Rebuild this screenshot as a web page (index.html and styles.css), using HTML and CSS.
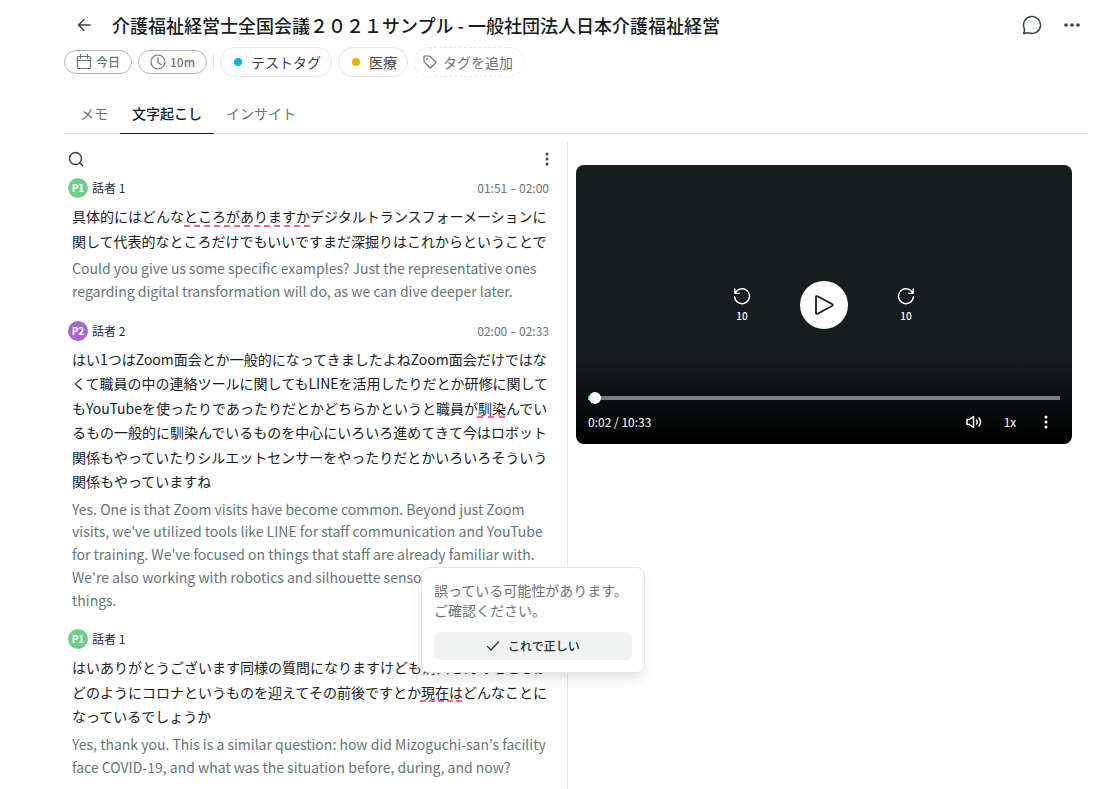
FILE: index.html
```html
<!DOCTYPE html>
<html lang="ja">
<head>
    <meta charset="UTF-8">
    <meta name="viewport" content="width=device-width, initial-scale=1.0">
    <title>介護福祉経営士全国会議２０２１サンプル</title>
    <link rel="stylesheet" href="styles.css">
</head>
<body>
    <header class="page-header">
        <div class="title-row">
            <button type="button" class="icon-button" aria-label="戻る">
                <svg class="icon icon-back" viewBox="0 0 16 16"><path d="M14 8H2.500M8 2.500L2.500 8L8 13.500"/></svg>
            </button>
            <h1>介護福祉経営士全国会議２０２１サンプル - 一般社団法人日本介護福祉経営</h1>
            <div class="title-actions">
                <button type="button" class="icon-button" aria-label="コメント">
                    <svg class="icon icon-comment" viewBox="0 0 20 20"><path d="M1.500 18.500Q2.600 16.500 2.500 15Q2.500 14 2 12.700A8.500 8.500 0 1 1 7.300 18Q6 17.500 4.500 18Q3 18.500 1.500 18.500Z"/></svg>
                </button>
                <button type="button" class="icon-button" aria-label="その他">
                    <svg class="icon icon-dots" viewBox="0 0 20 20"><circle cx="4" cy="10" r="1.800"/><circle cx="10" cy="10" r="1.800"/><circle cx="16" cy="10" r="1.800"/></svg>
                </button>
            </div>
        </div>

        <div class="meta-row">
            <span class="chip">
                <svg class="icon chip-icon" viewBox="0 0 16 16"><rect x="1.500" y="2.500" width="13" height="12" rx="1"/><path d="M1.500 6.500h13M4.500 0.500v4M11.500 0.500v4"/></svg>
                今日
            </span>
            <span class="chip">
                <svg class="icon chip-icon" viewBox="0 0 16 16"><circle cx="8" cy="8" r="7"/><path d="M8 3.500V8.500L11 10.500"/></svg>
                10m
            </span>
            <span class="meta-divider"></span>
            <button type="button" class="tag"><span class="tag-dot tag-dot-cyan"></span>テストタグ</button>
            <button type="button" class="tag"><span class="tag-dot tag-dot-yellow"></span>医療</button>
            <button type="button" class="tag tag-add">
                <svg class="icon tag-icon" viewBox="0 0 14 14"><path d="M1.500 1H6Q6.700 1 7.200 1.500L12.500 6.700Q13.200 7.400 12.500 8.100L8.100 12.500Q7.400 13.200 6.700 12.500L1.500 7.200Q1 6.700 1 6V1.500Q1 1 1.500 1Z"/><circle cx="4" cy="4" r="0.400"/></svg>
                タグを追加
            </button>
        </div>

        <nav class="tabs">
            <a href="#memo" class="tab">メモ</a>
            <a href="#transcript" class="tab active">文字起こし</a>
            <a href="#insight" class="tab">インサイト</a>
        </nav>
    </header>

    <main class="content">
        <section class="transcript" id="transcript">
            <div class="toolbar">
                <button type="button" class="tool-button" aria-label="検索">
                    <svg class="icon icon-search" viewBox="0 0 16 16"><circle cx="7.500" cy="7.500" r="6"/><path d="M12 12L14.500 14.500"/></svg>
                </button>
                <button type="button" class="tool-button" aria-label="メニュー">
                    <svg class="icon icon-dots icon-small" viewBox="0 0 16 16"><circle cx="8" cy="3" r="1.500"/><circle cx="8" cy="8" r="1.500"/><circle cx="8" cy="13" r="1.500"/></svg>
                </button>
            </div>

            <article class="segment">
                <div class="speaker">
                    <span class="avatar avatar-green">P1</span>
                    <span class="speaker-name">話者 1</span>
                    <span class="time">01:51 – 02:00</span>
                </div>
                <p class="speech">具体的にはどんな<span class="unsure">ところがありますか</span>デジタルトランスフォーメーションに関して代表的なところだけでもいいですまだ深掘りはこれからということで</p>
                <p class="translation" lang="en">Could you give us some specific examples? Just the representative ones regarding digital transformation will do, as we can dive deeper later.</p>
            </article>

            <article class="segment">
                <div class="speaker">
                    <span class="avatar avatar-purple">P2</span>
                    <span class="speaker-name">話者 2</span>
                    <span class="time">02:00 – 02:33</span>
                </div>
                <p class="speech">はい1つはZoom面会とか一般的になってきましたよねZoom面会だけではなくて職員の中の連絡ツールに関してもLINEを活用したりだとか研修に関してもYouTubeを使ったりであったりだとかどちらかというと職員が<span class="unsure">馴染</span>んでいるもの一般的に馴染んでいるものを中心にいろいろ進めてきて今はロボット関係もやっていたりシルエットセンサーをやったりだとかいろいろそういう関係もやっていますね</p>
                <p class="translation" lang="en">Yes. One is that Zoom visits have become common. Beyond just Zoom visits, we've utilized tools like LINE for staff communication and YouTube for training. We've focused on things that staff are already familiar with. We're also working with robotics and silhouette sensors, among other things.</p>
            </article>

            <article class="segment">
                <div class="speaker">
                    <span class="avatar avatar-green">P1</span>
                    <span class="speaker-name">話者 1</span>
                </div>
                <div class="speech">はいありがとうございます同様の質問になりますけども溝口さんのところがどのようにコロナというものを迎えてその前後ですとか<span class="unsure has-popover">現在は<span class="popover">
                    <span class="popover-text">誤っている可能性があります。<br>ご確認ください。</span>
                    <button type="button" class="confirm-button">
                        <svg class="icon icon-check" viewBox="0 0 14 14"><path d="M1.500 7.500L5 11L12.500 3"/></svg>
                        これで正しい
                    </button>
                </span></span>どんなことになっているでしょうか</div>
                <p class="translation" lang="en">Yes, thank you. This is a similar question: how did Mizoguchi-san's facility face COVID-19, and what was the situation before, during, and now?</p>
            </article>
        </section>

        <aside class="media">
            <div class="player">
                <div class="player-main">
                    <button type="button" class="skip-button" aria-label="10秒戻る">
                        <svg class="icon skip-icon" viewBox="0 0 20 20"><path d="M2 2v5h5M2.500 6.800A8.300 8.300 0 1 1 1.800 11"/></svg>
                        10
                    </button>
                    <button type="button" class="play-button" aria-label="再生">
                        <svg class="icon play-icon" viewBox="0 0 20 20"><path d="M2 2.200v15.600q0 1.700 1.500 0.900L18 11q1.400-1 0-2L3.500 1.300Q2 0.500 2 2.200Z"/></svg>
                    </button>
                    <button type="button" class="skip-button" aria-label="10秒進む">
                        <svg class="icon skip-icon" viewBox="0 0 20 20"><path d="M18 2v5h-5M17.500 6.800A8.300 8.300 0 1 0 18.200 11"/></svg>
                        10
                    </button>
                </div>
                <div class="player-controls">
                    <input type="range" class="seek" min="0" max="633" value="2" aria-label="再生位置">
                    <div class="control-row">
                        <span class="play-time">0:02 / 10:33</span>
                        <button type="button" class="control-button" aria-label="音量">
                            <svg class="icon volume-icon" viewBox="0 0 16 16"><path d="M1 5.500h2.500L7.500 2.500v11L3.500 10.500H1ZM10.500 6q1.500 2 0 4M13 4q3 4 0 8"/></svg>
                        </button>
                        <button type="button" class="control-button">1x</button>
                        <button type="button" class="control-button" aria-label="設定">
                            <svg class="icon icon-dots icon-small" viewBox="0 0 16 16"><circle cx="8" cy="3" r="1.500"/><circle cx="8" cy="8" r="1.500"/><circle cx="8" cy="13" r="1.500"/></svg>
                        </button>
                    </div>
                </div>
            </div>
        </aside>
    </main>
</body>
</html>
```
FILE: styles.css
```css
* {
    box-sizing: border-box;
}

body {
    margin: 0;
    padding: 0 32px 0 64px;
    min-height: 100vh;
    display: flex;
    flex-direction: column;
    background: #ffffff;
    color: #171c1f;
    font-family: "Noto Sans CJK JP", sans-serif;
    font-size: 14px;
}

button {
    margin: 0;
    padding: 0;
    border: none;
    background: none;
    color: inherit;
    font: inherit;
    cursor: pointer;
}

p {
    margin: 0;
}

.icon {
    display: block;
    flex-shrink: 0;
    width: 16px;
    height: 16px;
    fill: none;
    stroke: currentColor;
    stroke-width: 1.5;
    stroke-linecap: round;
    stroke-linejoin: round;
}

.icon-dots {
    width: 20px;
    height: 20px;
    fill: currentColor;
    stroke: none;
}

.icon-small {
    width: 16px;
    height: 16px;
}

/* ヘッダー */
.title-row {
    display: flex;
    align-items: center;
    gap: 8px;
    padding-top: 4px;
    height: 46px;
}

.icon-button {
    display: flex;
    align-items: center;
    justify-content: center;
    width: 40px;
    height: 40px;
    color: #374448;
}

.icon-comment {
    width: 20px;
    height: 20px;
}

h1 {
    flex: 1;
    min-width: 0;
    margin: 0;
    overflow: hidden;
    white-space: nowrap;
    font-size: 18px;
    font-weight: 500;
    line-height: 28px;
}

.title-actions {
    display: flex;
    margin-right: -4px;
}

.meta-row {
    display: flex;
    align-items: center;
    gap: 6px;
    height: 32px;
}

.chip {
    display: flex;
    align-items: center;
    gap: 4px;
    height: 24px;
    padding: 0 11px 1px;
    border: 1px solid #b0b5b7;
    border-radius: 12px;
    color: #66757a;
    font-size: 12px;
    font-weight: 500;
}

.chip-icon {
    stroke-width: 1.2;
}

.meta-divider {
    width: 1px;
    height: 16px;
    background: #e2e5e6;
}

.tag {
    display: flex;
    align-items: center;
    height: 30px;
    padding: 0 10px;
    border: 1px solid #e4e6e7;
    border-radius: 15px;
    color: #374448;
}

.tag-dot {
    width: 8px;
    height: 8px;
    margin: 0 9px 0 3px;
    border-radius: 50%;
}

.tag-dot-cyan {
    background: #06b6d4;
}

.tag-dot-yellow {
    background: #eab308;
}

.tag-add {
    gap: 6px;
    padding: 0 10px 0 8px;
    border-style: dashed;
    color: #66757a;
}

.tag-icon {
    width: 14px;
    height: 14px;
    stroke-width: 1.2;
}

.tabs {
    display: flex;
    margin-top: 16px;
    border-bottom: 1px solid #e2e5e6;
}

.tab {
    height: 40px;
    margin-bottom: -1px;
    padding: 0 12px;
    line-height: 38px;
    color: #66757a;
    text-decoration: none;
}

.tab:first-child {
    padding-left: 16px;
}

.tab.active {
    border-bottom: 1px solid #171c1f;
    color: #171c1f;
    font-weight: 500;
}

/* 文字起こし */
.content {
    flex: 1;
    display: flex;
    padding-top: 8px;
}

.transcript {
    width: calc(50% - 8px);
    padding: 0 18px 0 8px;
    border-right: 1px solid #e2e5e6;
}

.toolbar {
    display: flex;
    justify-content: space-between;
    height: 34px;
    margin: 0 -6px 0 -4px;
}

.tool-button {
    display: flex;
    align-items: center;
    justify-content: center;
    width: 16px;
    height: 34px;
    color: #374448;
}

.segment {
    margin-bottom: 16px;
}

.segment:last-child {
    margin-bottom: 0;
}

.speaker {
    display: flex;
    align-items: center;
    gap: 4px;
    height: 24px;
    margin-left: -4px;
    margin-bottom: 4px;
    font-size: 12px;
    line-height: 16px;
}

.avatar {
    width: 20px;
    height: 20px;
    border-radius: 50%;
    color: #ffffff;
    font-size: 10px;
    font-weight: 700;
    line-height: 20px;
    text-align: center;
}

.avatar-green {
    background: #6dce88;
}

.avatar-purple {
    background: #a666cb;
}

.speaker-name {
    flex: 1;
    color: #262f33;
}

.time {
    color: #66757a;
}

.speech {
    margin-bottom: 4px;
    line-height: 1.75;
}

.translation {
    color: #66757a;
    line-height: 1.625;
}

.unsure {
    text-decoration: underline dashed #fb6484 2px;
    text-underline-offset: 3px;
}

.has-popover {
    position: relative;
    display: inline-block;
}

/* 確認ポップオーバー */
.popover {
    position: absolute;
    left: 0;
    bottom: calc(100% + 7px);
    z-index: 10;
    width: 224px;
    padding: 12px;
    border: 1px solid #e2e5e6;
    border-radius: 8px;
    background: #ffffff;
    box-shadow: 0 8px 14px -4px rgba(0, 0, 0, 0.15);
}

.popover-text {
    display: block;
    margin-bottom: 12px;
    color: #66757a;
    line-height: 20px;
    white-space: nowrap;
}

.confirm-button {
    display: flex;
    align-items: center;
    justify-content: center;
    gap: 8px;
    width: 100%;
    height: 28px;
    border-radius: 6px;
    background: #f1f2f2;
    color: #262f33;
    font-size: 12px;
    font-weight: 500;
}

.icon-check {
    width: 14px;
    height: 14px;
    stroke-width: 1.2;
}

/* プレーヤー */
.media {
    flex: 1;
    padding: 23px 16px 0 8px;
}

.player {
    display: flex;
    flex-direction: column;
    aspect-ratio: 16 / 9;
    border-radius: 8px;
    background: linear-gradient(to bottom, #171c1f 70%, #000000);
    color: #ffffff;
}

.player-main {
    flex: 1;
    display: flex;
    align-items: center;
    justify-content: center;
    gap: 34px;
    padding-top: 52px;
}

.skip-button {
    display: flex;
    flex-direction: column;
    align-items: center;
    gap: 4px;
    width: 24px;
    margin: 0 12px;
    font-size: 10px;
    font-weight: 500;
    line-height: 14px;
}

.skip-icon {
    width: 18px;
    height: 18px;
}

.play-button {
    display: flex;
    align-items: center;
    justify-content: center;
    width: 48px;
    height: 48px;
    border-radius: 50%;
    background: #ffffff;
    color: #171c1f;
}

.play-icon {
    width: 20px;
    height: 20px;
    stroke-width: 1.8;
}

.player-controls {
    padding: 0 12px 8px;
}

.seek {
    display: block;
    width: 100%;
    height: 12px;
    margin: 0 0 4px;
    appearance: none;
    background: linear-gradient(to right, #22b8dd 2px, #7b7e80 2px) center / 100% 4px no-repeat;
}

.seek::-webkit-slider-thumb {
    appearance: none;
    width: 12px;
    height: 12px;
    border-radius: 50%;
    background: #ffffff;
}

.control-row {
    display: flex;
    align-items: center;
    height: 28px;
    margin-right: -4px;
    font-size: 12px;
    line-height: 16px;
}

.play-time {
    flex: 1;
}

.control-button {
    display: flex;
    align-items: center;
    justify-content: center;
    width: 36px;
    height: 28px;
}
```
